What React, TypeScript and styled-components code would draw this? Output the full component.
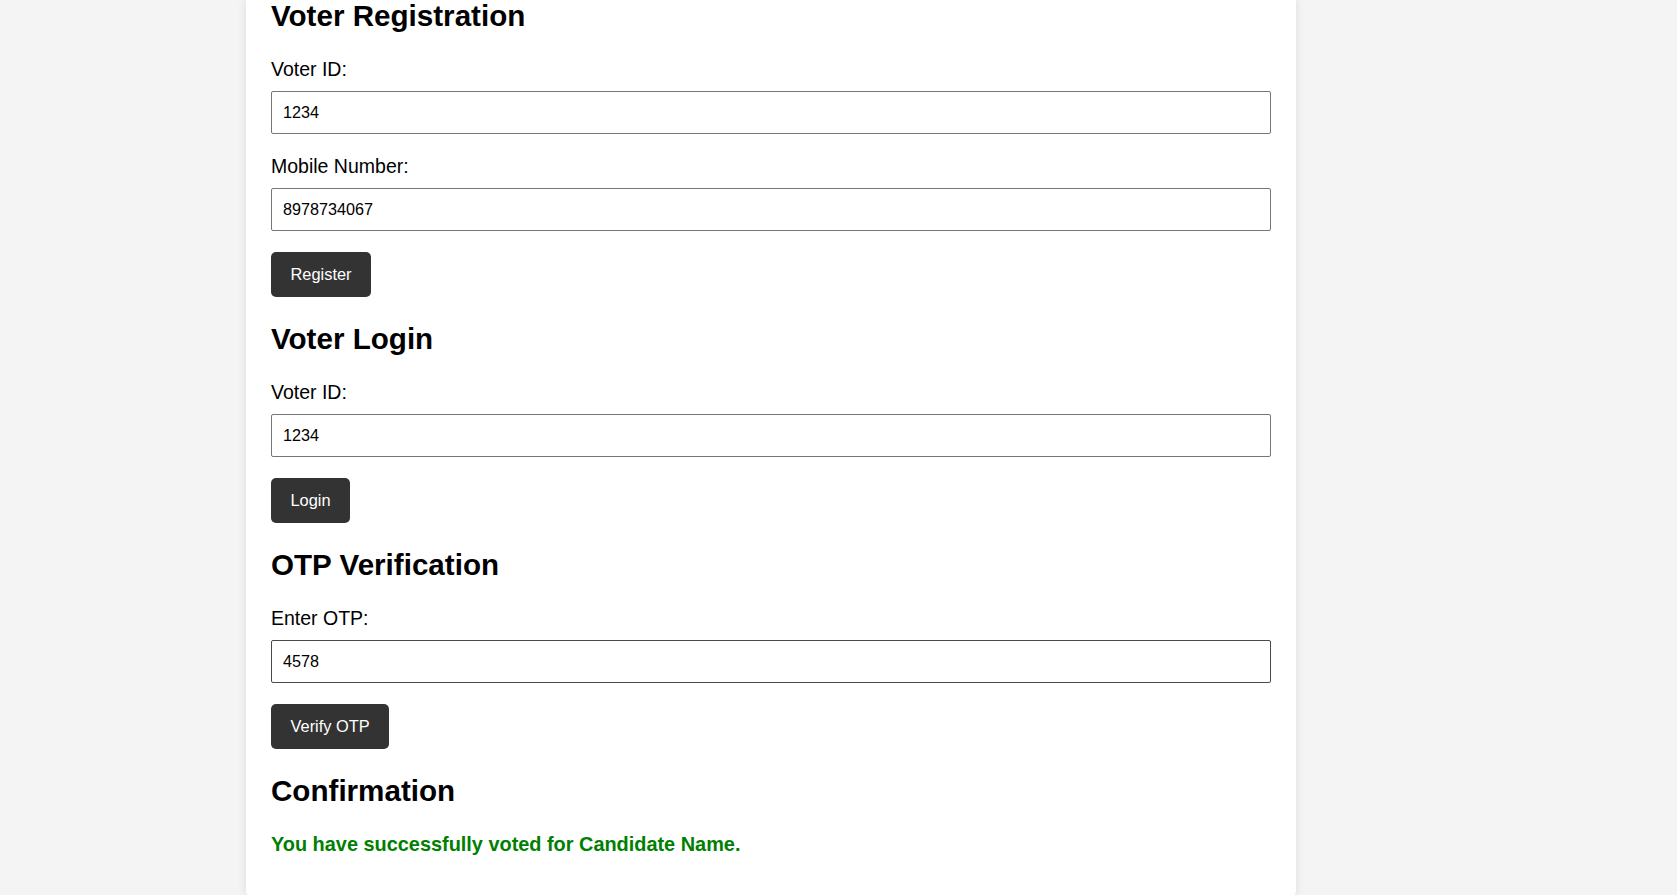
import styled, { createGlobalStyle } from "styled-components";

const GlobalStyle = createGlobalStyle`
  html, body {
    margin: 0;
    padding: 0;
    background: #f4f4f4;
    font-family: "Liberation Sans", Arial, Helvetica, sans-serif;
    color: #000;
  }
  * {
    box-sizing: border-box;
  }
`;

const Page = styled.div`
  display: flex;
  padding-left: 246px;
`;

const Card = styled.main`
  width: 1050px;
  margin-top: -1px;
  padding: 0 25px 23px;
  background: #fff;
  border-radius: 0 0 6px 6px;
  box-shadow: 0 0 10px rgba(0, 0, 0, 0.1);
`;

const Section = styled.section`
  display: block;
`;

const Title = styled.h2`
  margin: 25.5px 0;
  font-size: 29.6px;
  line-height: 33px;
  font-weight: bold;

  ${Section}:first-child & {
    margin-top: 0;
  }
`;

const Label = styled.label`
  display: block;
  margin-bottom: 11px;
  font-size: 19.5px;
  line-height: 22px;
`;

const Field = styled.input<{ $dark?: boolean }>`
  display: block;
  width: 100%;
  height: 43.5px;
  margin: 0 0 20.5px;
  padding: 0 11px;
  border: 1px solid ${(p) => (p.$dark ? "#4a4a4a" : "#767676")};
  border-radius: 2px;
  background: #fff;
  font-family: inherit;
  font-size: 16.2px;
  color: #000;
  outline: none;
`;

const Button = styled.button`
  display: block;
  height: 45px;
  padding: 0 19.5px;
  border: none;
  border-radius: 5px;
  background: #333;
  color: #fff;
  font-family: inherit;
  font-size: 16.4px;
  cursor: pointer;
`;

const Success = styled.p`
  margin: 0 0 19px;
  font-size: 19.9px;
  line-height: 22px;
  font-weight: bold;
  color: #008000;
`;

export default function App() {
  return (
    <>
      <GlobalStyle />
      <Page>
        <Card>
          <Section>
            <Title>Voter Registration</Title>
            <Label htmlFor="reg-id">Voter ID:</Label>
            <Field id="reg-id" type="text" defaultValue="1234" />
            <Label htmlFor="reg-mobile">Mobile Number:</Label>
            <Field id="reg-mobile" type="text" defaultValue="8978734067" />
            <Button>Register</Button>
          </Section>

          <Section>
            <Title>Voter Login</Title>
            <Label htmlFor="login-id">Voter ID:</Label>
            <Field id="login-id" type="text" defaultValue="1234" />
            <Button>Login</Button>
          </Section>

          <Section>
            <Title>OTP Verification</Title>
            <Label htmlFor="otp">Enter OTP:</Label>
            <Field id="otp" type="text" defaultValue="4578" $dark />
            <Button>Verify OTP</Button>
          </Section>

          <Section>
            <Title>Confirmation</Title>
            <Success>You have successfully voted for Candidate Name.</Success>
          </Section>
        </Card>
      </Page>
    </>
  );
}
